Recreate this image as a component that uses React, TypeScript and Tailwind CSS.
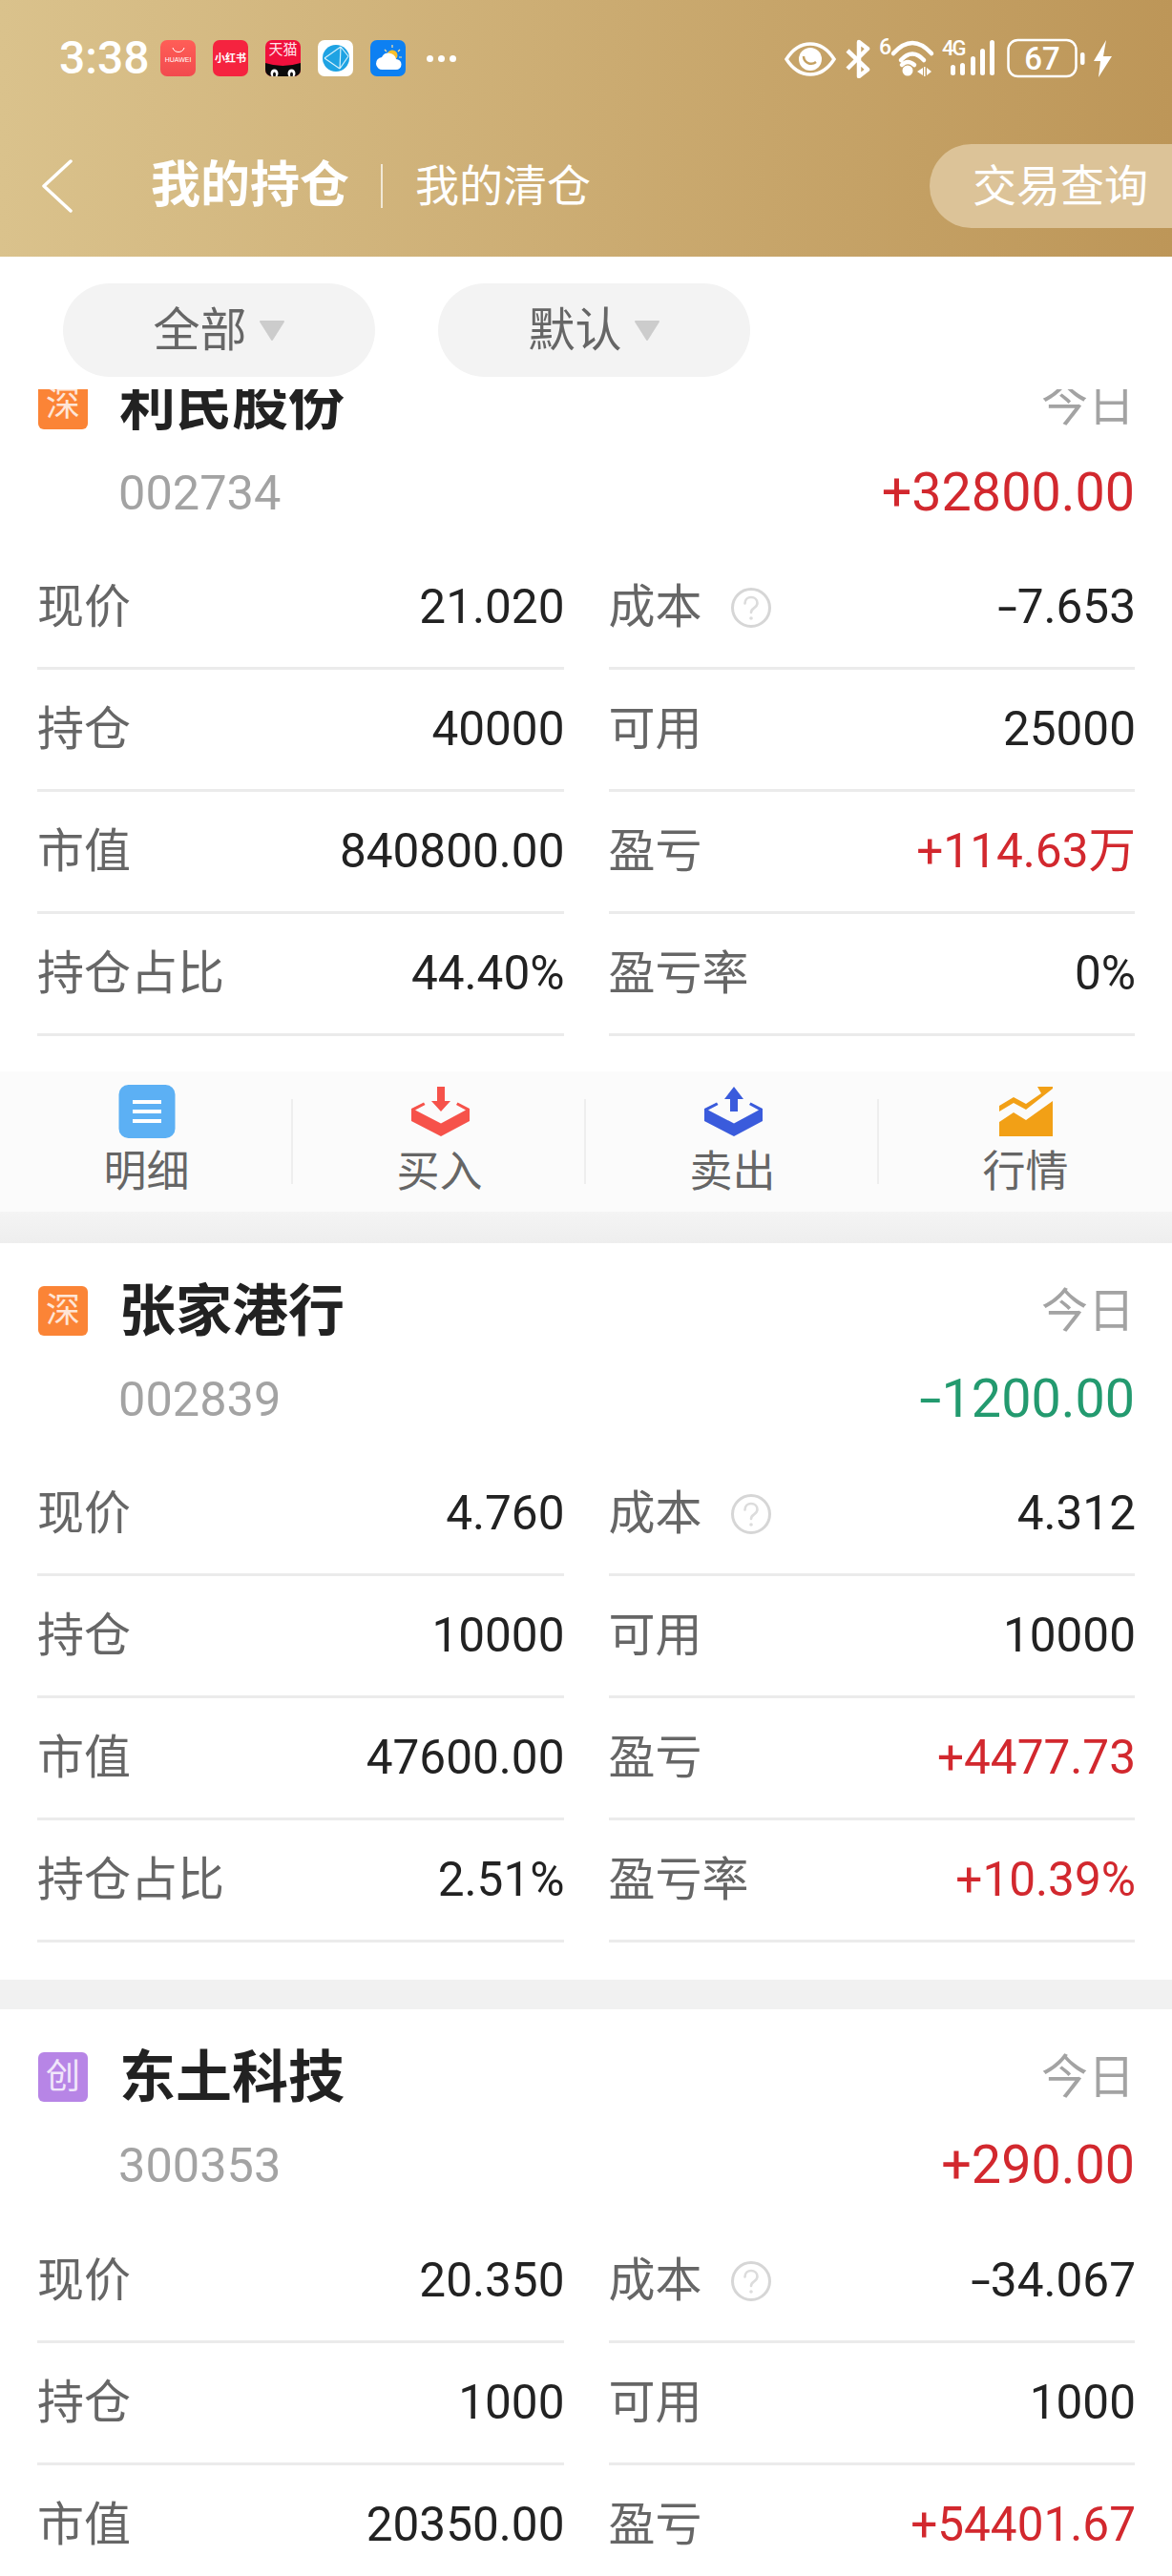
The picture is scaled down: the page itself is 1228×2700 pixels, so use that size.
import React from "react";

const CJK = "font-['Roboto','Noto_Sans_CJK_SC',sans-serif]";

type Row = [string, string, boolean?];
type Stock = {
  badge: string;
  badgeColor: string;
  name: string;
  code: string;
  today: string;
  todayColor: string;
  rows: [Row, Row][];
};

const RED = "text-[#d2282e]";
const GREEN = "text-[#239a6f]";

const stocks: Stock[] = [
  {
    badge: "深",
    badgeColor: "bg-[#fb8436]",
    name: "利民股份",
    code: "002734",
    today: "+32800.00",
    todayColor: RED,
    rows: [
      [["现价", "21.020"], ["成本", "-7.653"]],
      [["持仓", "40000"], ["可用", "25000"]],
      [["市值", "840800.00"], ["盈亏", "+114.63万", true]],
      [["持仓占比", "44.40%"], ["盈亏率", "0%"]],
    ],
  },
  {
    badge: "深",
    badgeColor: "bg-[#fb8436]",
    name: "张家港行",
    code: "002839",
    today: "-1200.00",
    todayColor: GREEN,
    rows: [
      [["现价", "4.760"], ["成本", "4.312"]],
      [["持仓", "10000"], ["可用", "10000"]],
      [["市值", "47600.00"], ["盈亏", "+4477.73", true]],
      [["持仓占比", "2.51%"], ["盈亏率", "+10.39%", true]],
    ],
  },
  {
    badge: "创",
    badgeColor: "bg-[#b785e6]",
    name: "东土科技",
    code: "300353",
    today: "+290.00",
    todayColor: RED,
    rows: [
      [["现价", "20.350"], ["成本", "-34.067"]],
      [["持仓", "1000"], ["可用", "1000"]],
      [["市值", "20350.00"], ["盈亏", "+54401.67", true]],
    ],
  },
];

function Num({ v }: { v: string }) {
  if (!v.startsWith("-")) return <>{v}</>;
  return (
    <>
      <span className="inline-block w-[0.42em] scale-x-150 text-center">-</span>
      {v.slice(1)}
    </>
  );
}

function Help() {
  return (
    <svg width="44" height="44" viewBox="0 0 44 44" fill="none" className="ml-[29px]">
      <circle cx="22" cy="22" r="19.5" stroke="#d6d6d6" strokeWidth="3" />
      <path d="M15.5 17.5c0-4 3-6.5 6.5-6.5s6.5 2.4 6.5 6c0 2.6-1.500 4-3.500 5.300-2 1.300-3 2.400-3 4.700" stroke="#dcdcdc" strokeWidth="2.600" strokeLinecap="round" />
      <circle cx="22" cy="33" r="1.800" fill="#dcdcdc" />
    </svg>
  );
}

function Cell({ row }: { row: Row }) {
  const [label, value, red] = row;
  return (
    <div className="flex h-[128px] items-center border-b-[3px] border-[#ebebeb]">
      <span className="text-[49px] leading-none text-[#666666]">{label}</span>
      {label === "成本" && <Help />}
      <span className={`-mr-px ml-auto text-[49.5px] leading-none ${red ? RED : "text-[#222222]"}`}>
        <Num v={value} />
      </span>
    </div>
  );
}

function Card({ s }: { s: Stock }) {
  return (
    <div className="bg-white px-[39px]">
      <div className="flex h-[86px] items-center pl-px">
        <div className={`flex h-[52px] w-[52px] items-center justify-center rounded-[6px] text-[36px] leading-none text-white/80 ${s.badgeColor}`}>
          {s.badge}
        </div>
        <div className="ml-[33px] text-[59px] font-bold leading-none text-[#222222]">{s.name}</div>
        <div className="ml-auto text-[49px] leading-none text-[#a3a3a3]">今日</div>
      </div>
      <div className="flex h-[100px] items-center">
        <div className="ml-[85px] text-[50.5px] leading-none text-[#a3a3a3]">{s.code}</div>
        <div className={`ml-auto text-[55.7px] leading-none ${s.todayColor}`}>
          <Num v={s.today} />
        </div>
      </div>
      <div className={`${s.code === "300353" ? "mt-[8px]" : "mt-[7px]"} grid grid-cols-2 gap-x-[47px]`}>
        {s.rows.map((r, i) => (
          <React.Fragment key={i}>
            <Cell row={r[0]} />
            <Cell row={r[1]} />
          </React.Fragment>
        ))}
      </div>
    </div>
  );
}

function DetailIcon() {
  return (
    <svg width="60" height="56" viewBox="0 0 60 56">
      <rect x="0.500" width="59" height="56" rx="10" fill="#5cb0f4" />
      <path d="M15 18h30M15 28h30M15 38h30" stroke="#fff" strokeWidth="4" />
    </svg>
  );
}

function TrayIcon({ color, up }: { color: string; up?: boolean }) {
  return (
    <svg width="62" height="54" viewBox="19 11 62 54" fill={color}>
      <path d="M20 35L33 28.500L34.500 31L24 36.500L51 50.500L77 36.500L67 31L68.500 28.500L81 35V48L51 64L20 48Z" />
      {up ? (
        <path d="M51 12L61 25H55V38H47V25H41Z" />
      ) : (
        <path d="M47 12H55V27H61L51 38L41 27H47Z" />
      )}
    </svg>
  );
}

function ChartIcon() {
  return (
    <svg width="58" height="54" viewBox="15 11 58 54" fill="#f2a016">
      <path d="M16 49L31 39L44 47L72 27V64H16Z" />
      <path d="M16 32L31 23L44 30L60 19L56 12H72V14L44 36L31 29L16 38Z" />
    </svg>
  );
}

function Action({ icon, label, divider }: { icon: React.ReactNode; label: string; divider?: boolean }) {
  return (
    <div className="relative flex flex-1 flex-col items-center pt-[14px]">
      <div className="flex h-[56px] items-center justify-center">{icon}</div>
      <div className="mt-[13px] text-[45px] leading-none text-[#666666]">{label}</div>
      {divider && <div className="absolute right-0 top-[29px] h-[89px] w-[2px] bg-[#eeeeee]" />}
    </div>
  );
}

function ActionBar() {
  return (
    <div className="flex h-[147px] bg-[#fbfbfb]">
      <Action icon={<DetailIcon />} label="明细" divider />
      <Action icon={<TrayIcon color="#f6524a" />} label="买入" divider />
      <Action icon={<TrayIcon color="#3a5bdc" up />} label="卖出" divider />
      <Action icon={<ChartIcon />} label="行情" />
    </div>
  );
}

function AppIcons() {
  return (
    <div className="ml-[14px] flex items-center gap-[18px]">
      <div className="flex h-[38px] w-[37px] flex-col items-center rounded-[7px] bg-gradient-to-b from-[#ff5e57] to-[#f24a4e] pt-[7px]">
        <svg width="14" height="7" viewBox="0 0 14 7" fill="none"><path d="M1 1c1.500 6 10.500 6 12 0" stroke="#fff" strokeWidth="1" /></svg>
        <span className="mt-[3px] font-['Liberation_Sans',sans-serif] text-[7px] leading-none text-white">HUAWEI</span>
      </div>
      <div className="flex h-[38px] w-[37px] items-center justify-center rounded-[7px] bg-[#f5233f] text-[11px] font-bold leading-none text-white">小红书</div>
      <div className="relative h-[38px] w-[37px] overflow-hidden rounded-[7px] bg-[#f0103c]">
        <div className="pt-[3px] text-center text-[15px] leading-none text-[#ffe4ea]">天猫</div>
        <svg className="absolute bottom-0 left-0" width="37" height="18" viewBox="0 0 37 18">
          <path d="M0 4Q18 10 37 4V18H0Z" fill="#0b0b0b" />
          <ellipse cx="9.500" cy="15" rx="4" ry="4.500" fill="#fff" />
          <ellipse cx="27.500" cy="15" rx="4" ry="4.500" fill="#fff" />
          <ellipse cx="9.500" cy="16" rx="1.500" ry="2.500" fill="#111" />
          <ellipse cx="27.500" cy="16" rx="1.500" ry="2.500" fill="#111" />
        </svg>
      </div>
      <div className="flex h-[38px] w-[37px] items-center justify-center rounded-[7px] bg-white">
        <svg width="30" height="30" viewBox="0 0 30 30">
          <circle cx="15" cy="15" r="14" fill="#1fa3e3" />
          <path d="M3 15L20 3M3 15L19 26M20 3L19 26M20 3L28 13M19 26L28 13" stroke="#d7f1fc" strokeWidth="1.200" fill="none" />
        </svg>
      </div>
      <div className="flex h-[38px] w-[37px] items-center justify-center rounded-[7px] bg-[#0d80f2]">
        <svg width="30" height="30" viewBox="0 0 30 30">
          <path d="M19 1V4M27 6L25 8M29 14H26M11 6L13 8" stroke="#fde2a0" strokeWidth="1.200" />
          <circle cx="19" cy="12" r="5.500" fill="#fbc02d" />
          <path d="M9 27a6.500 6.500 0 0 1-1-13 8 8 0 0 1 15 2 5.500 5.500 0 0 1 0 11Z" fill="#fff" />
        </svg>
      </div>
      <div className="ml-[4px] flex gap-[5px]">
        <i className="h-[7px] w-[7px] rounded-full bg-white" />
        <i className="h-[7px] w-[7px] rounded-full bg-white" />
        <i className="h-[7px] w-[7px] rounded-full bg-white" />
      </div>
    </div>
  );
}

function StatusRight() {
  return (
    <div className="relative ml-auto h-[42px] w-[344px]">
      <svg className="absolute inset-0" width="344" height="42" viewBox="0 0 344 42" fill="#fff">
        {/* eye */}
        <path d="M3 22C10 11 18 6 28 6s18 5 25 16C46 33 38 38 28 38S10 33 3 22Z" fill="none" stroke="#fff" strokeWidth="3.500" />
        <circle cx="28" cy="22" r="12" />
        <path d="M21 19a8 8 0 0 0 13 6" fill="none" stroke="#c4a060" strokeWidth="2.500" />
        {/* bluetooth */}
        <path d="M67 13L88 33L79 40L79 4L88 11L67 32" fill="none" stroke="#fff" strokeWidth="4.500" strokeLinejoin="round" />
        {/* wifi */}
        <path d="M115 16Q135 -6 155 16M123 23Q135 10 147 23M124 28Q130 22 137 28" fill="none" stroke="#fff" strokeWidth="4.500" strokeLinecap="round" />
        <circle cx="130" cy="34" r="5.500" />
        <path d="M146 31L140 35L146 39ZM147 30H148.500V40H147ZM150 31L155 35L150 39Z" />
        {/* signal */}
        <rect x="175" y="28" width="5" height="11" rx="2.500" />
        <rect x="185" y="26" width="5" height="13" rx="2.500" />
        <rect x="196" y="19" width="5" height="20" rx="2.500" />
        <rect x="206" y="11" width="5" height="28" rx="2.500" />
        <rect x="216" y="2" width="5" height="37" rx="2.500" />
        {/* battery */}
        <rect x="235.500" y="2" width="71" height="38" rx="10" fill="none" stroke="#fff" strokeWidth="2.500" />
        <text x="271" y="33" textAnchor="middle" fontSize="33" fontFamily="Roboto, sans-serif" fontWeight="500">67</text>
        <rect x="311" y="15" width="4.500" height="13" rx="2" />
        <path d="M338 2L325 24H332L330 41L344 19H335Z" />
      </svg>
      <span className="absolute left-[100px] top-[-1px] text-[23px] font-medium leading-[22px]">6</span>
      <span className="absolute left-[166px] top-[0px] text-[22px] font-medium leading-[22px] tracking-[-2px]">4G</span>
    </div>
  );
}

export default function App() {
  return (
    <div className={`h-[2700px] w-[1228px] overflow-hidden bg-white ${CJK}`}>
      <header className="h-[269px] bg-gradient-to-r from-[#dac28c] to-[#bd9658] text-white">
        <div className="flex h-[42px] translate-y-[40px] items-center pl-[62px] pr-[63px]">
          <span className="w-[92px] text-[48px] font-medium leading-none">3:38</span>
          <AppIcons />
          <StatusRight />
        </div>
        <div className="mt-[109px] flex h-[88px] items-center pl-[44px]">
          <svg width="32" height="56" viewBox="0 0 32 56" fill="none">
            <path d="M30 2L2 28L30 54" stroke="#fff" strokeWidth="3.500" strokeLinecap="round" strokeLinejoin="round" />
          </svg>
          <div className="ml-[82px] text-[52px] font-bold leading-none">我的持仓</div>
          <div className="ml-[33px] h-[46px] w-[2px] bg-white/70" />
          <div className="ml-[34px] text-[46px] leading-none">我的清仓</div>
          <div className="ml-auto flex h-[88px] w-[254px] items-center rounded-l-[44px] bg-[#dcc398] pl-[45px] text-[46px] leading-none">交易查询</div>
        </div>
      </header>
      <div className="relative z-10 flex h-[139px] gap-[66px] bg-white pl-[66px] pt-[28px]">
        {["全部", "默认"].map((t) => (
          <div key={t} className="flex h-[98px] w-[327px] items-center justify-center rounded-[49px] bg-[#f3f3f3]">
            <span className="text-[49px] leading-none text-[#666666]">{t}</span>
            <svg className="ml-[12px]" width="28" height="22" viewBox="0 0 28 22"><path d="M2 2H26L14 21Z" fill="#cccccc" stroke="#cccccc" strokeWidth="2" strokeLinejoin="round" /></svg>
          </div>
        ))}
      </div>
      <div className="-mt-[55px]">
        <div className="pt-[28px]">
          <Card s={stocks[0]} />
          <div className="h-[37px] bg-white" />
          <ActionBar />
          <div className="h-[33px] bg-gradient-to-b from-[#f4f4f4] to-[#eeeeee]" />
        </div>
        <div className="bg-white pt-[28px]">
          <Card s={stocks[1]} />
          <div className="h-[39px]" />
        </div>
        <div className="h-[31px] bg-[#f1f1f1]" />
        <div className="bg-white pt-[28px]">
          <Card s={stocks[2]} />
        </div>
      </div>
    </div>
  );
}
